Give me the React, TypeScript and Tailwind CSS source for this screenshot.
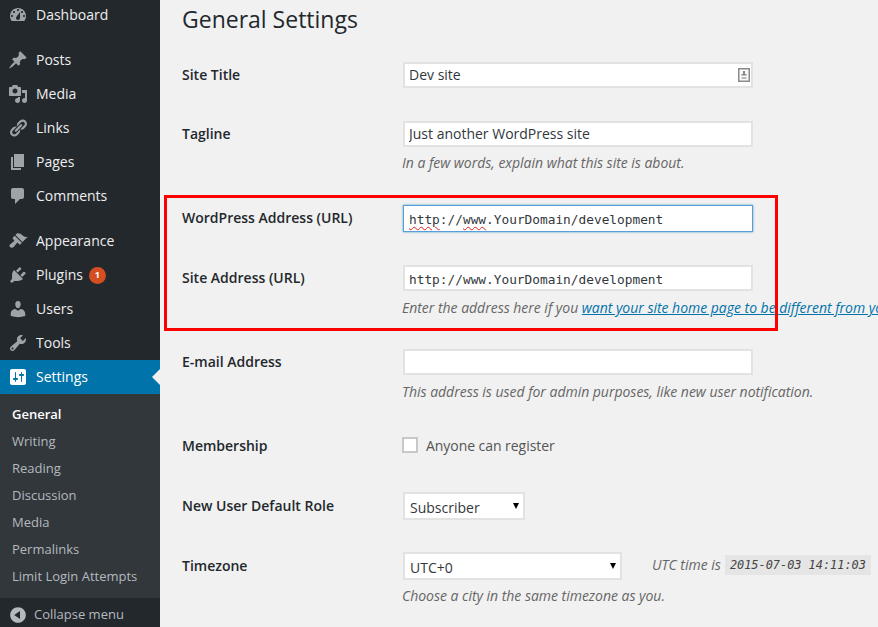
import React from "react";

const paths: Record<string, string> = {
  dashboard: "M3.76 16h12.48c1.1-1.37 1.76-3.11 1.76-5 0-4.42-3.58-8-8-8s-8 3.58-8 8c0 1.89.66 3.63 1.76 5zM10 4c.55 0 1 .45 1 1s-.45 1-1 1-1-.45-1-1 .45-1 1-1zM6 6c.55 0 1 .45 1 1s-.45 1-1 1-1-.45-1-1 .45-1 1-1zm8 0c.55 0 1 .45 1 1s-.45 1-1 1-1-.45-1-1 .45-1 1-1zm-5.37 5.55L12 7v6c0 1.1-.9 2-2 2s-2-.9-2-2c0-.57.24-1.08.63-1.45zM4 10c.55 0 1 .45 1 1s-.45 1-1 1-1-.45-1-1 .45-1 1-1zm12 0c.55 0 1 .45 1 1s-.45 1-1 1-1-.45-1-1 .45-1 1-1z",
  post: "M10.44 3.02l1.82-1.82 6.36 6.35-1.83 1.82c-1.05-.68-2.48-.57-3.41.36l-.75.75c-.92.93-1.04 2.35-.35 3.41l-1.83 1.82-2.41-2.41-2.8 2.79c-.42.42-3.38 2.71-3.8 2.29s1.86-3.39 2.28-3.81l2.79-2.79L4.1 9.36l1.83-1.82c1.05.69 2.48.57 3.4-.36l.75-.75c.93-.92 1.05-2.35.36-3.41z",
  media: "M13 11V4c0-.55-.45-1-1-1h-1.67L9 1H5L3.67 3H2c-.55 0-1 .45-1 1v7c0 .55.45 1 1 1h10c.55 0 1-.45 1-1zM7 4.5c1.38 0 2.5 1.12 2.5 2.5S8.38 9.5 7 9.5 4.5 8.38 4.5 7 5.62 4.5 7 4.5zM14 6h5v10.5c0 1.38-1.12 2.5-2.5 2.5S14 17.88 14 16.5s1.12-2.5 2.5-2.5c.17 0 .34.02.5.05V9h-3V6zm-4 8.05V13h2v3.5c0 1.38-1.12 2.5-2.5 2.5S7 17.88 7 16.5 8.12 14 9.5 14c.17 0 .34.02.5.05z",
  links: "M17.74 2.76c1.68 1.69 1.68 4.41 0 6.1l-1.53 1.52c-1.12 1.12-2.7 1.47-4.14 1.09l2.62-2.61.76-.77.76-.76c.84-.84.84-2.2 0-3.04-.84-.85-2.2-.85-3.04 0l-.77.76-3.38 3.38c-.37-1.44-.02-3.02 1.1-4.14l1.52-1.53c1.69-1.68 4.42-1.68 6.1 0zM8.59 13.43l5.34-5.34c.42-.42.42-1.1 0-1.52-.44-.43-1.13-.39-1.53 0l-5.33 5.34c-.42.42-.42 1.1 0 1.52.44.43 1.13.39 1.52 0zm-.76 2.29l4.14-4.15c.38 1.44.03 3.02-1.09 4.14l-1.52 1.53c-1.69 1.68-4.41 1.68-6.1 0-1.68-1.68-1.68-4.42 0-6.1l1.53-1.52c1.12-1.12 2.7-1.47 4.14-1.1l-4.14 4.15c-.85.84-.85 2.2 0 3.05.84.84 2.2.84 3.04 0z",
  page: "M6 15V2h10v13H6zm-1 1h8v2H3V5h2v11z",
  comments: "M5 2h9c1.1 0 2 .9 2 2v7c0 1.1-.9 2-2 2h-2l-5 5v-5H5c-1.1 0-2-.9-2-2V4c0-1.1.9-2 2-2z",
  appearance: "M14.48 11.06L7.41 3.99l1.5-1.5c.5-.56 2.3-.47 3.51.32 1.21.8 1.43 1.28 2.91 2.1 1.18.64 2.45 1.26 4.45.85zm-.71.71L6.7 4.7 4.93 6.47c-.39.39-.39 1.02 0 1.41l1.06 1.06c.39.39.39 1.03 0 1.42-.6.6-1.43 1.11-2.21 1.69-.35.26-.7.53-1.01.84C1.43 13.23.91 14.86 2.1 16.05c1.19 1.19 2.82.67 4.15-.67.31-.31.58-.66.84-1.01.58-.78 1.09-1.61 1.69-2.21.39-.39 1.03-.39 1.42 0l1.06 1.06c.39.39 1.02.39 1.41 0z",
  plugins: "M13.11 4.36L9.87 7.6 8 5.73l3.24-3.24c.35-.34 1.05-.2 1.56.32.52.51.66 1.21.31 1.55zm-8 1.77l.91-1.12 9.01 9.01-1.19.84c-.71.71-2.63 1.16-3.82 1.16H6.14L4.9 17.26c-.59.59-1.54.59-2.12 0-.59-.58-.59-1.53 0-2.12l1.24-1.24v-3.88c0-1.13.4-3.19 1.09-3.89zm7.26 3.97l3.24-3.24c.34-.35 1.04-.21 1.55.31.52.51.66 1.21.31 1.55l-3.24 3.25z",
  users: "M10 9.25c-2.27 0-2.73-3.44-2.73-3.44C7 4.02 7.82 2 9.97 2c2.16 0 2.98 2.02 2.71 3.81 0 0-.41 3.44-2.68 3.44zm0 2.57L12.72 10c2.39 0 4.52 2.33 4.52 4.53v2.49s-3.65 1.13-7.24 1.13c-3.65 0-7.24-1.13-7.24-1.13v-2.49c0-2.25 1.94-4.48 4.47-4.48z",
  tools: "M16.68 9.77c-1.34 1.34-3.3 1.67-4.95.99l-5.41 6.52c-.99.99-2.59.99-3.58 0s-.99-2.59 0-3.57l6.52-5.42c-.68-1.65-.35-3.61.99-4.95 1.28-1.28 3.12-1.62 4.72-1.06l-2.89 2.89 2.82 2.82 2.86-2.87c.53 1.58.18 3.39-1.08 4.65zM3.81 16.21c.4.39 1.04.39 1.43 0 .4-.4.4-1.04 0-1.43-.39-.4-1.03-.4-1.43 0-.39.39-.39 1.03 0 1.43z",
  settings: "M18 16V4c0-1.1-.9-2-2-2H4c-1.1 0-2 .9-2 2v12c0 1.1.9 2 2 2h12c1.1 0 2-.9 2-2zM8 11h1c.55 0 1 .45 1 1s-.45 1-1 1H8v1.5c0 .28-.22.5-.5.5s-.5-.22-.5-.5V13H6c-.55 0-1-.45-1-1s.45-1 1-1h1V5.5c0-.28.22-.5.5-.5s.5.22.5.5V11zm5-2h-1c-.55 0-1-.45-1-1s.45-1 1-1h1V5.5c0-.28.22-.5.5-.5s.5.22.5.5V7h1c.55 0 1 .45 1 1s-.45 1-1 1h-1v5.5c0 .28-.22.5-.5.5s-.5-.22-.5-.5V9z",
  collapse: "M10 2.16c4.33 0 7.84 3.51 7.84 7.84s-3.51 7.84-7.84 7.84S2.16 14.33 2.16 10 5.71 2.16 10 2.16zm2 11.72V6.12L6.18 9.97z",
};

function Dash({ name, className }: { name: string; className: string }) {
  return (
    <svg viewBox="0 0 20 20" className={className} fill="currentColor" fillRule="evenodd">
      <path d={paths[name]} />
    </svg>
  );
}

function MenuItem({ icon, label, badge, active }: { icon: string; label: string; badge?: string; active?: boolean }) {
  return (
    <div className={"relative flex h-[34px] items-center text-[14px] " + (active ? "bg-[#0073aa] text-white" : "text-[#eeeeee]")}>
      <Dash name={icon} className={"ml-[8px] h-5 w-5 shrink-0 " + (active ? "text-white" : "text-[#9ea3a8]")} />
      <span className="ml-[8px] pb-[2px]">{label}</span>
      {badge && (
        <span className="ml-[6px] flex h-[17px] w-[17px] items-center justify-center rounded-full bg-[#d54e21] text-[9px] font-bold text-white">
          {badge}
        </span>
      )}
      {active && (
        <span className="absolute right-0 top-[9px] h-0 w-0 border-y-[8px] border-r-[8px] border-y-transparent border-r-[#f1f1f1]" />
      )}
    </div>
  );
}

function Sub({ label, current }: { label: string; current?: boolean }) {
  return (
    <div className={"flex h-[27px] items-center pl-[12px] text-[13px] " + (current ? "font-semibold text-white" : "text-[#b4b9be]")}>
      {label}
    </div>
  );
}

function Label({ children }: { children: React.ReactNode }) {
  return <div className="w-[221px] shrink-0 pb-[2px] text-[14px] font-semibold text-[#23282d]">{children}</div>;
}

function Desc({ className, children }: { className: string; children: React.ReactNode }) {
  return (
    <div className={"ml-[220px] h-5 text-[14px] leading-5 tracking-[-0.02px] italic text-[#666666] " + className}>
      {children}
    </div>
  );
}

const boxBase = "block h-[26px] w-[350px] border-2 border-[#e2e2e2] bg-white px-[4px] text-[#32373c] outline-none";
const inputBox = boxBase + " pb-[2px] text-[14px]";
const mono = "pt-[2px] font-['DejaVu_Sans_Mono',monospace] text-[12.8px]";

function FakeSelect({ value, width }: { value: string; width: string }) {
  return (
    <div className={"relative flex h-[28px] items-center border-2 border-[#e2e2e2] bg-white pl-[5px] text-[14px] text-[#32373c] " + width}>
      <span className="pt-[2px]">{value}</span>
      <span className="absolute right-[4px] top-[9px] h-0 w-0 border-x-[3.5px] border-t-[6px] border-x-transparent border-t-black" />
    </div>
  );
}

const squiggle = "underline decoration-wavy decoration-[#e0201c] decoration-1 underline-offset-2";

export default function App() {
  return (
    <div className="flex h-[627px] w-[878px] overflow-hidden bg-[#f1f1f1] font-['Open_Sans',sans-serif]">
      <aside className="flex h-[627px] w-40 shrink-0 flex-col overflow-hidden bg-[#23282d]">
        <div className="-mt-[2px]">
          <MenuItem icon="dashboard" label="Dashboard" />
        </div>
        <div className="mt-[11px]">
          <MenuItem icon="post" label="Posts" />
          <MenuItem icon="media" label="Media" />
          <MenuItem icon="links" label="Links" />
          <MenuItem icon="page" label="Pages" />
          <MenuItem icon="comments" label="Comments" />
        </div>
        <div className="mt-[11px]">
          <MenuItem icon="appearance" label="Appearance" />
          <MenuItem icon="plugins" label="Plugins" badge="1" />
          <MenuItem icon="users" label="Users" />
          <MenuItem icon="tools" label="Tools" />
          <MenuItem icon="settings" label="Settings" active />
        </div>
        <div className="flex-1 bg-[#32373c] pt-[7px]">
          <Sub label="General" current />
          <Sub label="Writing" />
          <Sub label="Reading" />
          <Sub label="Discussion" />
          <Sub label="Media" />
          <Sub label="Permalinks" />
          <Sub label="Limit Login Attempts" />
        </div>
        <div className="flex h-[29px] shrink-0 items-center pt-[5px] text-[13px] text-[#b4b9be]">
          <Dash name="collapse" className="ml-[8px] h-[20px] w-[20px] text-[#b4b9be]" />
          <span className="ml-[6px]">Collapse menu</span>
        </div>
      </aside>

      <main className="relative min-w-0 flex-1 overflow-hidden whitespace-nowrap pl-[22px]">
        <h1 className="mt-[4px] h-[30px] text-[23px] leading-[30px] text-[#23282d]">General Settings</h1>

        <div className="mt-[28px] flex items-center">
          <Label>Site Title</Label>
          <div className="relative">
            <input readOnly value="Dev site" className={inputBox} />
            <svg viewBox="0 0 12 14" className="absolute right-[3px] top-[6px] h-[14px] w-[12px]">
              <rect x="0.75" y="0.75" width="10.5" height="12.5" fill="#fafafa" stroke="#8a8a8a" strokeWidth="1.5" />
              <rect x="5" y="3" width="2" height="3" fill="#888" />
              <rect x="3.5" y="6" width="5" height="1.5" fill="#888" />
              <rect x="3.5" y="9" width="5" height="2" fill="#bbb" />
            </svg>
          </div>
        </div>

        <div className="mt-[33px] flex items-center">
          <Label>Tagline</Label>
          <input readOnly value="Just another WordPress site" className={inputBox} />
        </div>
        <Desc className="mt-[6px]">In a few words, explain what this site is about.</Desc>

        <div className="mt-[32px] flex items-center">
          <Label>WordPress Address (URL)</Label>
          <div className={"flex h-[27px] w-[350px] items-center border border-[#5b9dd9] bg-white pl-[5px] text-[#32373c] shadow-[0_0_2px_rgba(30,140,190,0.8)] " + mono}>
            <span className={squiggle}>http</span>://<span className={squiggle}>www</span>.YourDomain/development
          </div>
        </div>

        <div className="mt-[33px] flex items-center">
          <Label>Site Address (URL)</Label>
          <input readOnly value="http://www.YourDomain/development" className={boxBase + " " + mono} />
        </div>
        <Desc className="mt-[7px]">
          Enter the address here if you <span className="text-[#0073aa] underline">want your site home page to be different from your WordPress address</span>.
        </Desc>

        <div className="mt-[31px] flex items-center">
          <Label>E-mail Address</Label>
          <input readOnly value="" className={inputBox} />
        </div>
        <Desc className="mt-[7px]">This address is used for admin purposes, like new user notification.</Desc>

        <div className="mt-[34px] flex h-5 items-center">
          <Label>Membership</Label>
          <span className="-ml-px mb-[2px] h-4 w-4 shrink-0 border-2 border-[#c8c8c8] bg-white" />
          <span className="ml-[8px] pb-[2px] text-[14px] tracking-[-0.05px] text-[#555555]">Anyone can register</span>
        </div>

        <div className="mt-[36px] flex items-center">
          <Label>New User Default Role</Label>
          <FakeSelect value="Subscriber" width="w-[122px]" />
        </div>

        <div className="mt-[32px] flex items-center">
          <Label>Timezone</Label>
          <FakeSelect value="UTC+0" width="w-[219px]" />
          <span className="ml-[30px] pb-[4px] text-[14px] italic text-[#666666]">UTC time is</span>
          <code className="mb-[2px] ml-[4px] flex h-[20px] w-[146px] items-center justify-center bg-[#e5e5e5] pt-[2px] font-['DejaVu_Sans_Mono',monospace] text-[11.9px] italic text-[#444444]">
            2015-07-03 14:11:03
          </code>
        </div>
        <Desc className="mt-[6px]">Choose a city in the same timezone as you.</Desc>

        <div className="pointer-events-none absolute left-[4px] top-[195px] h-[136px] w-[614px] border-[3px] border-[#ff0000]" />
      </main>
    </div>
  );
}
